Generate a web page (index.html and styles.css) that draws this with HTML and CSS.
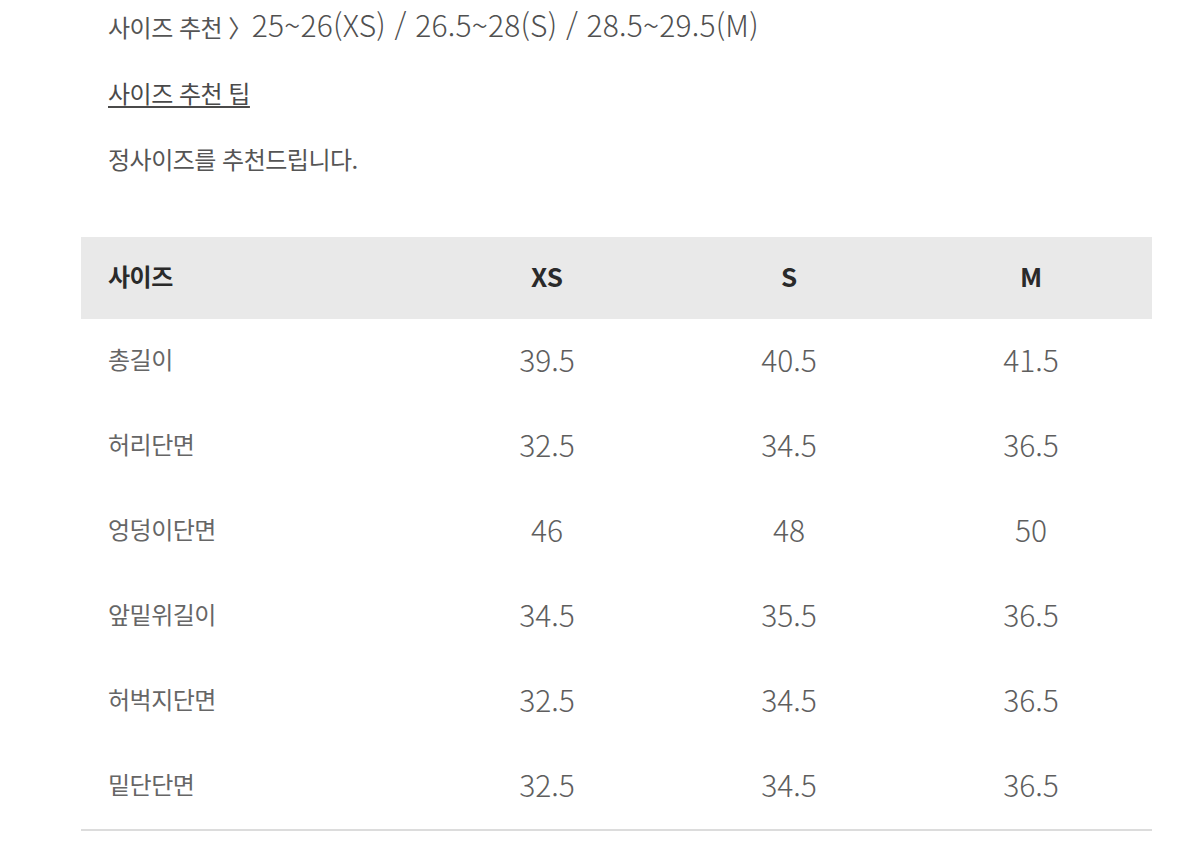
FILE: index.html
```html
<!DOCTYPE html>
<html lang="ko">
<head>
<meta charset="utf-8">
<link rel="stylesheet" href="styles.css">
</head>
<body>
<div class="page">
  <div class="notes">
    <p class="note">사이즈 추천 〉<span class="num">25~26(XS) / 26.5~28(S) / 28.5~29.5(M)</span></p>
    <p class="note tip">사이즈 추천 팁</p>
    <p class="note">정사이즈를 추천드립니다.</p>
  </div>
  <table class="size-table">
    <thead>
      <tr><th class="label">사이즈</th><th>XS</th><th>S</th><th>M</th></tr>
    </thead>
    <tbody>
      <tr><td class="label">총길이</td><td>39.5</td><td>40.5</td><td>41.5</td></tr>
      <tr><td class="label">허리단면</td><td>32.5</td><td>34.5</td><td>36.5</td></tr>
      <tr><td class="label">엉덩이단면</td><td>46</td><td>48</td><td>50</td></tr>
      <tr><td class="label">앞밑위길이</td><td>34.5</td><td>35.5</td><td>36.5</td></tr>
      <tr><td class="label">허벅지단면</td><td>32.5</td><td>34.5</td><td>36.5</td></tr>
      <tr><td class="label">밑단단면</td><td>32.5</td><td>34.5</td><td>36.5</td></tr>
    </tbody>
  </table>
</div>
</body>
</html>
```

FILE: styles.css
```css
html, body {
  margin: 0;
  padding: 0;
  background: #ffffff;
}
body {
  font-family: "Noto Sans CJK KR", "Noto Sans", sans-serif;
  color: #555555;
}
.page {
  width: 1200px;
  height: 848px;
  overflow: hidden;
}
.notes {
  padding: 0 0 0 108px;
  display: flex;
  flex-direction: column;
  gap: 30px;
  margin-top: 9px;
}
.note {
  margin: 0;
  font-size: 24px;
  line-height: 36px;
  height: 36px;
  letter-spacing: -0.5px;
}
.note .num {
  font-size: 30px;
  font-weight: 300;
  line-height: 24px;
  letter-spacing: 0.2px;
  color: #505050;
}
.tip {
  text-decoration: underline;
  text-decoration-thickness: 2px;
  text-underline-offset: 3px;
  color: #4a4a4a;
}
.size-table {
  margin: 60px 0 0 81px;
  width: 1071px;
  border-collapse: collapse;
  table-layout: fixed;
}
.size-table th,
.size-table td {
  padding: 0 0 6px 0;
  text-align: center;
  vertical-align: middle;
  width: 242px;
}
.size-table th.label,
.size-table td.label {
  width: 345px;
  text-align: left;
  padding-left: 27px;
  box-sizing: border-box;
}
.size-table thead tr {
  background: #e9e9e9;
}
.size-table th {
  height: 76px;
  font-size: 26px;
  font-weight: 700;
  color: #2a2a2a;
}
.size-table th.label {
  height: 82px;
  font-size: 24px;
  letter-spacing: -0.5px;
}
.size-table td {
  height: 79px;
  font-size: 30px;
  font-weight: 300;
  color: #5e5e5e;
}
.size-table td.label {
  height: 85px;
  font-size: 24px;
  font-weight: 400;
  letter-spacing: -0.5px;
  color: #666666;
}
.size-table tbody tr:last-child td {
  border-bottom: 2px solid #dcdcdc;
}
```
